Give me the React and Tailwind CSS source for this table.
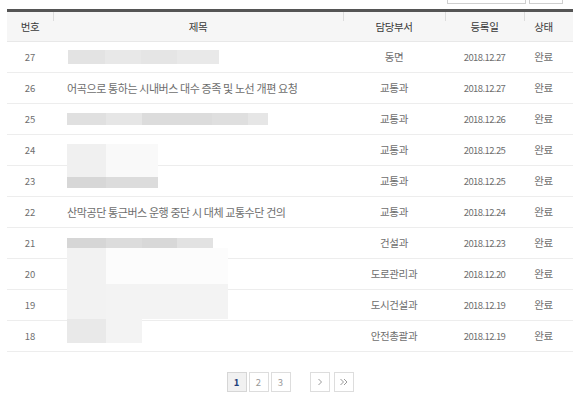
import React from "react";

const rows = [
  { no: 27, title: "", dept: "동면", date: "2018.12.27" },
  { no: 26, title: "어곡으로 통하는 시내버스 대수 증족 및 노선 개편 요청", dept: "교통과", date: "2018.12.27" },
  { no: 25, title: "", dept: "교통과", date: "2018.12.26" },
  { no: 24, title: "", dept: "교통과", date: "2018.12.25" },
  { no: 23, title: "", dept: "교통과", date: "2018.12.25" },
  { no: 22, title: "산막공단 통근버스 운행 중단 시 대체 교통수단 건의", dept: "교통과", date: "2018.12.24" },
  { no: 21, title: "", dept: "건설과", date: "2018.12.23" },
  { no: 20, title: "", dept: "도로관리과", date: "2018.12.20" },
  { no: 19, title: "", dept: "도시건설과", date: "2018.12.19" },
  { no: 18, title: "", dept: "안전총괄과", date: "2018.12.19" },
];

// mosaic blocks (censored content overlay): [left, top, width, height, color]
const mosaic = [
  [68, 50, 37, 14, "#e3e3e3"],
  [105, 50, 36, 14, "#e8e8e8"],
  [141, 50, 36, 14, "#e5e5e5"],
  [177, 50, 42, 14, "#e9e9e9"],
  [67, 113, 39, 12, "#e0e0e0"],
  [106, 113, 36, 12, "#e6e6e6"],
  [142, 113, 70, 12, "#dcdcdc"],
  [212, 113, 36, 12, "#dfdfdf"],
  [248, 113, 20, 12, "#e6e6e6"],
  [67, 144, 39, 33, "#f0f0f0"],
  [106, 144, 52, 33, "#f9f9f9"],
  [67, 177, 39, 11, "#d7d7d7"],
  [106, 177, 52, 11, "#dcdcdc"],
  [67, 238, 39, 10, "#d6d6d6"],
  [106, 238, 36, 10, "#dcdcdc"],
  [142, 238, 35, 10, "#d8d8d8"],
  [177, 238, 36, 10, "#e2e2e2"],
  [67, 248, 39, 71, "#f2f2f2"],
  [106, 248, 122, 36, "#fcfcfc"],
  [106, 284, 122, 35, "#f3f3f3"],
  [67, 319, 39, 24, "#e9e9e9"],
  [106, 319, 36, 24, "#f3f3f3"],
];

const cols = "grid grid-cols-[46px_290px_102px_79px_39px]";

function Sep() {
  return <span className="absolute left-0 top-0 h-[9px] w-px bg-[#dcdcdc]" />;
}

function PageBox({ children, active }) {
  return (
    <div
      className={
        "w-[20px] h-[20px] flex items-center justify-center border text-[9.5px] " +
        (active
          ? "border-[#d6d6d6] bg-[#f1f1f1] text-[#1f3f7a] font-bold"
          : "border-[#dddddd] bg-white text-[#999999]")
      }
    >
      {children}
    </div>
  );
}

export default function App() {
  return (
    <div className="relative w-[580px] h-[402px] bg-white overflow-hidden font-['Noto_Sans_CJK_KR','Noto_Sans',sans-serif]">
      {/* search box remnants */}
      <div className="flex justify-end gap-[3px] pr-[17px] h-[9px]">
        <div className="w-[79px] h-[4px] border-x border-b border-[#cfcfcf]" />
        <div className="w-[34px] h-[4px] border-x border-b border-[#cfcfcf]" />
      </div>

      <div className="mx-[7px] border-t-[3px] border-[#555555]">
        {/* header */}
        <div className={cols + " h-[30px] bg-[#f6f6f6] border-b border-[#e8e8e8] text-[10.5px] tracking-[-0.4px] text-[#3a3a3a]"}>
          <div className="relative flex items-center justify-center">번호</div>
          <div className="relative flex items-center justify-center"><Sep />제목</div>
          <div className="relative flex items-center justify-center"><Sep />담당부서</div>
          <div className="relative flex items-center justify-center"><Sep />등록일</div>
          <div className="relative flex items-center justify-center"><Sep />상태</div>
        </div>

        {rows.map((r) => (
          <div key={r.no} className={cols + " h-[31px] border-b border-[#ededed] text-[#6e6e6e]"}>
            <div className="flex items-center justify-center text-[9.5px]">{r.no}</div>
            <div className="flex items-center pl-[14px] text-[11px] tracking-[-0.4px] whitespace-nowrap">{r.title}</div>
            <div className="flex items-center justify-center text-[10.5px] tracking-[-0.4px]">{r.dept}</div>
            <div className="flex items-center justify-center text-[9.5px] tracking-[-0.6px]">{r.date}</div>
            <div className="flex items-center justify-center text-[10.5px] tracking-[-0.4px]">완료</div>
          </div>
        ))}

        {/* pagination */}
        <div className="flex justify-center items-center mt-[20px]">
          <div className="flex gap-[2px]">
            <PageBox active>1</PageBox>
            <PageBox>2</PageBox>
            <PageBox>3</PageBox>
          </div>
          <div className="flex gap-[4px] ml-[19px]">
            <PageBox>
              <svg width="8" height="8" viewBox="0 0 8 8" fill="none" stroke="#9a9a9a" strokeWidth="1">
                <path d="M2.5 1 L5.5 4 L2.5 7" />
              </svg>
            </PageBox>
            <PageBox>
              <svg width="10" height="8" viewBox="0 0 10 8" fill="none" stroke="#9a9a9a" strokeWidth="1">
                <path d="M1.5 1 L4.5 4 L1.5 7" />
                <path d="M5 1 L8 4 L5 7" />
              </svg>
            </PageBox>
          </div>
        </div>
      </div>

      {/* mosaic overlay hiding censored titles */}
      {mosaic.map(([l, t, w, h, c], i) => (
        <div
          key={i}
          className="absolute"
          style={{ left: l, top: t, width: w, height: h, background: c }}
        />
      ))}
    </div>
  );
}
